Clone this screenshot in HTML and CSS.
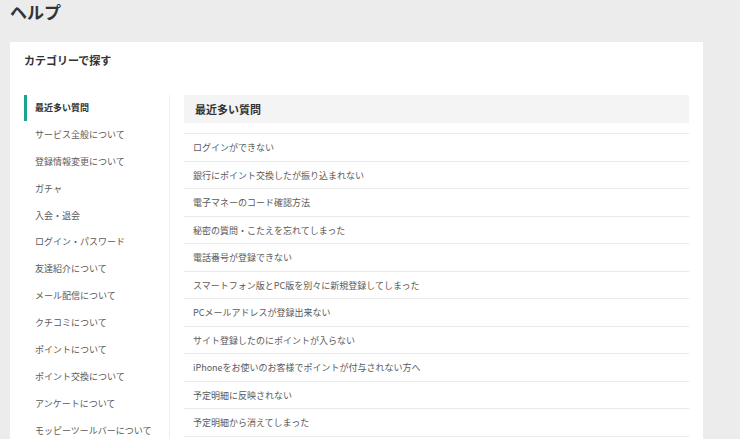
FILE: index.html
```html
<!DOCTYPE html>
<html lang="ja">
<head>
    <title>ヘルプ</title>
    <meta charset="UTF-8">
    <meta name="viewport" content="width=device-width, initial-scale=1.0">
    <link rel="stylesheet" href="styles.css">
</head>
<body>
    <h1 class="page-title">ヘルプ</h1>

    <div class="card">
        <h2 class="card-title">カテゴリーで探す</h2>

        <div class="help-body">
            <ul class="category-list">
                <li class="category-item active">最近多い質問</li>
                <li class="category-item">サービス全般について</li>
                <li class="category-item">登録情報変更について</li>
                <li class="category-item">ガチャ</li>
                <li class="category-item">入会・退会</li>
                <li class="category-item">ログイン・パスワード</li>
                <li class="category-item">友達紹介について</li>
                <li class="category-item">メール配信について</li>
                <li class="category-item">クチコミについて</li>
                <li class="category-item">ポイントについて</li>
                <li class="category-item">ポイント交換について</li>
                <li class="category-item">アンケートについて</li>
                <li class="category-item">モッピーツールバーについて</li>
            </ul>

            <div class="faq">
                <div class="faq-heading">最近多い質問</div>
                <ul class="faq-list">
                    <li class="faq-item">ログインができない</li>
                    <li class="faq-item">銀行にポイント交換したが振り込まれない</li>
                    <li class="faq-item">電子マネーのコード確認方法</li>
                    <li class="faq-item">秘密の質問・こたえを忘れてしまった</li>
                    <li class="faq-item">電話番号が登録できない</li>
                    <li class="faq-item">スマートフォン版とPC版を別々に新規登録してしまった</li>
                    <li class="faq-item">PCメールアドレスが登録出来ない</li>
                    <li class="faq-item">サイト登録したのにポイントが入らない</li>
                    <li class="faq-item">iPhoneをお使いのお客様でポイントが付与されない方へ</li>
                    <li class="faq-item">予定明細に反映されない</li>
                    <li class="faq-item">予定明細から消えてしまった</li>
                </ul>
            </div>
        </div>
    </div>
</body>
</html>
```

FILE: styles.css
```css
body {
    margin: 0;
    padding: 0 37px 0 10px;
    background-color: #ececec;
    font-family: "Noto Sans CJK JP", "Noto Sans", sans-serif;
    color: #555;
}
.page-title {
    margin: 0;
    height: 42px;
    line-height: 24px;
    font-size: 17px;
    font-weight: bold;
    color: #333;
}
.card {
    background-color: white;
    padding: 10px 14px 0 14px;
    min-height: 400px;
}
.card-title {
    margin: 0 0 27px 0;
    font-size: 11px;
    line-height: 16px;
    font-weight: bold;
    color: #333;
}
.help-body {
    display: flex;
}
.category-list {
    list-style: none;
    margin: 0;
    padding: 0;
    width: 145px;
    border-right: 1px solid #eee;
}
.category-item {
    height: 26.9px;
    line-height: 26px;
    padding-left: 11px;
    font-size: 9px;
    color: #5a5a5a;
}
.category-item.active {
    padding-left: 8px;
    border-left: 3px solid #1aa393;
    font-weight: bold;
    color: #333;
    height: 26px;
    margin-bottom: 0.9px;
}
.faq {
    flex: 1;
    margin-left: 14px;
}
.faq-heading {
    height: 28px;
    line-height: 28px;
    padding-left: 11px;
    background-color: #f4f4f4;
    font-size: 11px;
    font-weight: bold;
    color: #333;
}
.faq-list {
    list-style: none;
    margin: 10px 0 0 0;
    padding: 0;
    border-top: 1px solid #e9e9e9;
}
.faq-item {
    height: 26.5px;
    line-height: 27.5px;
    padding-left: 9px;
    border-bottom: 1px solid #e9e9e9;
    font-size: 9px;
    color: #5a5a5a;
}
```
